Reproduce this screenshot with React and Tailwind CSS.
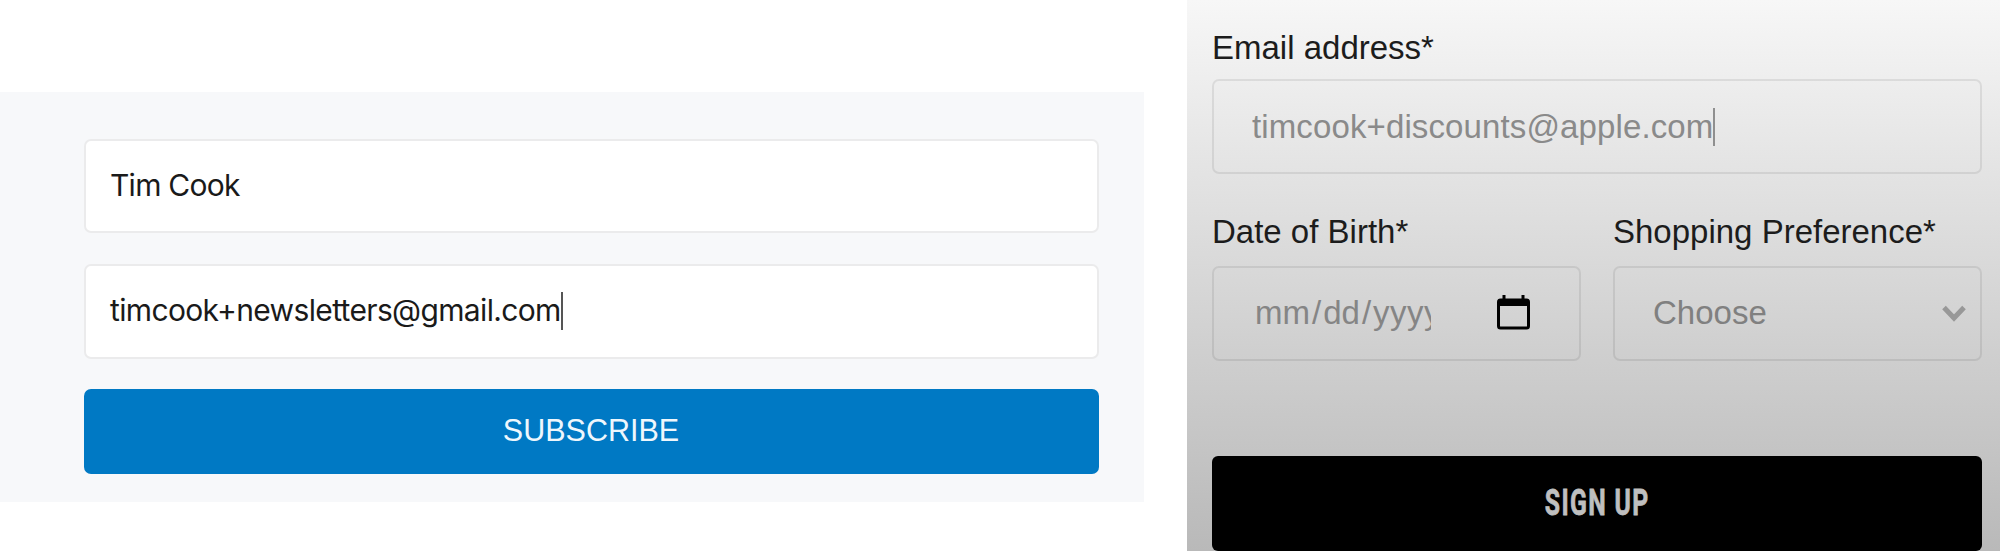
function Caret({ className }) {
  return <span className={`w-[2px] shrink-0 ${className}`} />;
}

function CalendarIcon() {
  return (
    <svg className="mb-[3px] h-[35px] w-[33px] shrink-0" viewBox="0 0 33 35" fill="none">
      <rect x="1.5" y="5" width="30" height="28" rx="2" stroke="#000" strokeWidth="3" />
      <path d="M2 4h29l1 1v6H1V5z" fill="#000" />
      <path d="M7 0v5M26 0v5" stroke="#000" strokeWidth="3" />
    </svg>
  );
}

function ChevronIcon() {
  return (
    <svg className="h-[17px] w-[24px] shrink-0" viewBox="0 0 24 17" fill="none">
      <path d="M2 2.5l10 10.5 10-10.5" stroke="#989898" strokeWidth="5" />
    </svg>
  );
}

function NewsletterForm() {
  return (
    <div className="mt-[92px] h-[410px] w-[1144px] bg-[#f7f8fa] pl-[84px] pr-[45px] pt-[47px] font-['Inter',sans-serif] text-[30px] text-[#1a1a1a]">
      <div className="flex h-[94px] items-center rounded-[7px] border-2 border-[#ebebec] bg-white pb-[2px] pl-[24px]">
        <span className="tracking-[-0.75px]">Tim Cook</span>
      </div>
      <div className="mt-[31px] flex h-[95px] items-center rounded-[7px] border-2 border-[#ebebec] bg-white pb-[2px] pl-[24px]">
        <span className="tracking-[-0.65px]">timcook+newsletters@gmail.com</span>
        <Caret className="h-[38px] bg-[#555]" />
      </div>
      <button className="mt-[30px] flex h-[85px] w-full items-center justify-center rounded-[7px] bg-[#0079c4] pb-[2px] pr-[1px] font-['Liberation_Sans',sans-serif] text-[30.5px] text-[#eef7fd]">
        SUBSCRIBE
      </button>
    </div>
  );
}

function SignUpForm() {
  return (
    <div className="ml-[43px] h-[551px] w-[813px] bg-linear-to-b from-[#f7f7f7] to-[#b9b9b9] pl-[25px] pr-[18px] pt-[29px] font-['Liberation_Sans',sans-serif] text-[33px] leading-[38px] text-[#1c1c1c]">
      <label className="block">Email address*</label>
      <div className="mt-[12px] flex h-[95px] items-center rounded-[7px] border-2 border-black/8 pl-[38px] text-[#8a8a8a]">
        <span className="tracking-[0.12px]">timcook+discounts@apple.com</span>
        <Caret className="h-[38px] bg-[#8f8f8f]" />
      </div>

      <div className="mt-[39px] grid grid-cols-2 gap-[32px]">
        <div>
          <label className="block">Date of Birth*</label>
          <div className="mt-[15px] flex h-[95px] items-center justify-between rounded-[7px] border-2 border-black/8 pl-[41px] pr-[49px] text-[#858585]">
            <div className="mb-[2px] w-[176px] overflow-hidden whitespace-nowrap">
              mm<span className="mx-[2px]">/</span>dd<span className="mx-[2px]">/</span>
              <span className="tracking-[0.5px]">yyyy</span>
            </div>
            <CalendarIcon />
          </div>
        </div>
        <div>
          <label className="block whitespace-nowrap">Shopping Preference*</label>
          <div className="mt-[15px] flex h-[95px] items-center justify-between rounded-[7px] border-2 border-black/8 pl-[38px] pr-[14px] text-[#808080]">
            <span className="mb-[2px]">Choose</span>
            <ChevronIcon />
          </div>
        </div>
      </div>

      <button className="mt-[95px] flex h-[95px] w-full items-center justify-center rounded-[6px] bg-black pb-[2px] font-['Roboto',sans-serif] text-[37px] font-bold text-[#bfbfbf]">
        <span className="scale-x-[0.67] tracking-[2px] [-webkit-text-stroke:0.8px_#bfbfbf]">SIGN UP</span>
      </button>
    </div>
  );
}

export default function App() {
  return (
    <div className="flex h-[552px] w-[2000px] items-start overflow-hidden bg-white">
      <NewsletterForm />
      <SignUpForm />
    </div>
  );
}
